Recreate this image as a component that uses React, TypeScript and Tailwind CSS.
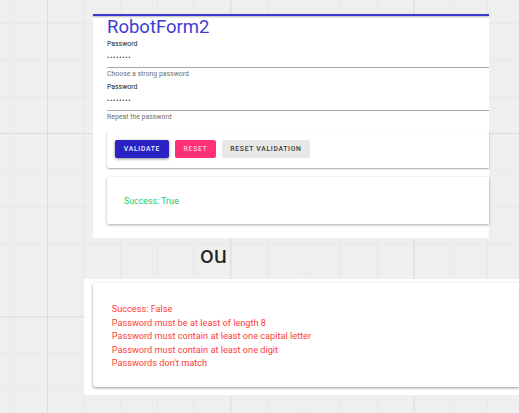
const font = { fontFamily: "Roboto, 'Liberation Sans', sans-serif" };

const PasswordField = ({ hint }: { hint: string }) => (
  <div className="flex flex-col">
    <p className="text-[6.9px] leading-[9px] text-[#222]">Password</p>
    <div className="h-[19px] border-b border-[#a8a8a8] flex items-center">
      <span className="text-[6.5px] leading-[6px] tracking-[0.85px] text-[#333]">••••••••</span>
    </div>
    <p className="mt-[2px] text-[6.9px] leading-[9px] text-[#6f6f6f]">{hint}</p>
  </div>
);

export default function App() {
  return (
    <div
      style={font}
      className="w-[519px] h-[413px] overflow-hidden flex flex-col pt-[14px] bg-[#efefef] bg-[linear-gradient(to_right,#dcdcdc_1px,transparent_1px),linear-gradient(to_bottom,#dcdcdc_1px,transparent_1px),linear-gradient(to_right,#e8e8e8_1px,transparent_1px),linear-gradient(to_bottom,#e8e8e8_1px,transparent_1px)] bg-[size:183.33px_183.33px,183.33px_183.33px,36.667px_36.667px,36.667px_36.667px] bg-[position:47px_133px,47px_133px,10.33px_23px,10.33px_23px]"
    >
      {/* first screenshot: valid form */}
      <div className="ml-[93px] w-[396px] h-[224px] bg-white flex flex-col shrink-0">
        <div className="h-[2px] bg-[#3a3ad0] shadow-[0_1px_2px_rgba(0,0,0,0.3)] relative z-10" />
        <div className="pl-[14px] flex flex-col">
          <h1 className="h-[22px] text-[18.5px] leading-[22px] text-[#3d3dd2]">RobotForm2</h1>
          <div className="mt-[2px]">
            <PasswordField hint="Choose a strong password" />
          </div>
          <div className="mt-[3.6px]">
            <PasswordField hint="Repeat the password" />
          </div>

          <div className="mt-[9.4px] h-[37px] bg-white rounded-l-[2px] shadow-[0_1px_2px_rgba(0,0,0,0.35)] flex items-start pt-[9px] pl-[8px] gap-[6px]">
            <button className="w-[54px] h-[18.5px] rounded-[2px] bg-[#2a22c6] text-[#ececff] text-[6.8px] font-medium tracking-[0.7px] shadow-[0_1px_3px_rgba(0,0,0,0.45)]">
              VALIDATE
            </button>
            <button className="w-[41px] h-[18.5px] rounded-[2px] bg-[#ff2f78] text-[#ffc9da] text-[6.8px] font-medium tracking-[0.7px]">
              RESET
            </button>
            <button className="w-[88px] h-[18.5px] rounded-[2px] bg-[#e8e8e8] text-[#3a3a3a] text-[6.8px] font-medium tracking-[0.7px]">
              RESET VALIDATION
            </button>
          </div>

          <div className="mt-[9px] h-[47.5px] bg-white rounded-l-[2px] shadow-[0_1px_3px_rgba(0,0,0,0.35)] flex items-center pl-[17px]">
            <p className="text-[8.8px] leading-[10px] text-[#1ccb6c]">Success: True</p>
          </div>
        </div>
      </div>

      <p className="mt-[6px] ml-[200px] text-[24px] leading-[23px] text-[#222]">ou</p>

      {/* second screenshot: failed validation */}
      <div className="mt-[12px] ml-[84px] w-[435px] h-[116px] bg-white pl-[9px] pt-[4px] shrink-0">
        <div className="h-[104px] bg-white rounded-l-[3px] shadow-[0_1px_3px_rgba(0,0,0,0.4)] pl-[18.7px] pt-[19px] flex flex-col text-[9.2px] leading-[13.5px] text-[#ff3d3d]">
          <p>Success: False</p>
          <p>Password must be at least of length 8</p>
          <p>Password must contain at least one capital letter</p>
          <p>Password must contain at least one digit</p>
          <p>Passwords don't match</p>
        </div>
      </div>
    </div>
  );
}
